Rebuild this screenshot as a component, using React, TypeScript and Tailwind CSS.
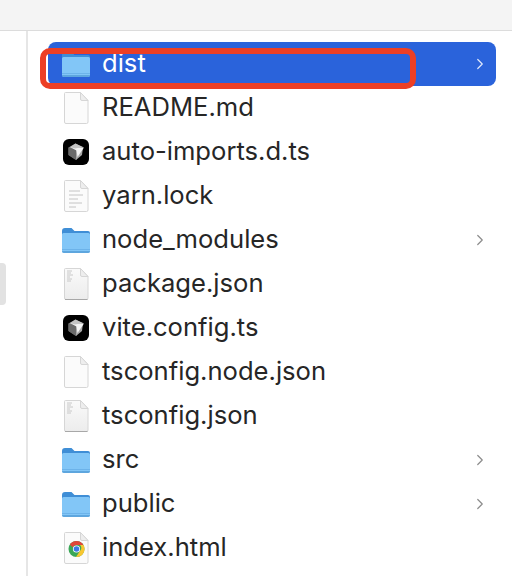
import { ChevronRight } from 'lucide-react';

type Kind = 'folder' | 'doc' | 'lines' | 'json' | 'vite' | 'chrome';

const files: { name: string; kind: Kind; chevron?: boolean }[] = [
    { name: 'dist', kind: 'folder', chevron: true },
    { name: 'README.md', kind: 'doc' },
    { name: 'auto-imports.d.ts', kind: 'vite' },
    { name: 'yarn.lock', kind: 'lines' },
    { name: 'node_modules', kind: 'folder', chevron: true },
    { name: 'package.json', kind: 'json' },
    { name: 'vite.config.ts', kind: 'vite' },
    { name: 'tsconfig.node.json', kind: 'doc' },
    { name: 'tsconfig.json', kind: 'json' },
    { name: 'src', kind: 'folder', chevron: true },
    { name: 'public', kind: 'folder', chevron: true },
    { name: 'index.html', kind: 'chrome' },
];

function PageShape({ children, shaded }: { children?: React.ReactNode; shaded?: boolean }) {
    return (
        <svg width="30" height="34" viewBox="0 0 30 34">
            <defs>
                <linearGradient id="pageShade" x1="0" y1="0" x2="0" y2="1">
                    <stop offset="0" stopColor="#fafafa" />
                    <stop offset="1" stopColor="#ececec" />
                </linearGradient>
            </defs>
            <path
                d="M4.5 1.5H19.5L27 9.5V31a1.500 1.500 0 0 1-1.500 1.500H5A1.500 1.500 0 0 1 3.500 31V2.500a1 1 0 0 1 1-1Z"
                fill={shaded ? 'url(#pageShade)' : '#fbfbfb'}
                stroke="#d6d6d6"
            />
            {shaded && <path d="M4 32.500H26.500" stroke="#a8a8a8" strokeWidth="1" />}
            <path d="M19.500 1.500V8a1.500 1.500 0 0 0 1.500 1.500H27Z" fill="#eeeeee" stroke="#d6d6d6" />
            {children}
        </svg>
    );
}

function FileIcon({ kind }: { kind: Kind }) {
    if (kind === 'folder') {
        return (
            <svg width="30" height="28" viewBox="0 0 30 28">
                <path d="M1 5a3 3 0 0 1 3-3h6.500l3 3H27a2 2 0 0 1 2 2v4H1Z" fill="#3f8ed6" />
                <path d="M1 8.500A1.500 1.500 0 0 1 2.500 7H27.500A1.500 1.500 0 0 1 29 8.500V25a2 2 0 0 1-2 2H3a2 2 0 0 1-2-2Z" fill="#82c6f7" />
                <rect x="1" y="23" width="28" height="1" fill="#6cb3ea" />
                <path d="M1 25h28a2 2 0 0 1-2 2H3a2 2 0 0 1-2-2Z" fill="#5ea6de" />
            </svg>
        );
    }
    if (kind === 'vite') {
        return (
            <svg width="26" height="26" viewBox="0 0 26 26">
                <rect width="26" height="26" rx="6" fill="#000" />
                <path d="M12.500 4.500 20 8.500 13 21 5.500 16V8.500Z" fill="#7c7c7c" />
                <path d="M5.500 8.500 13 11V21L5.500 16Z" fill="#6a6a6a" />
                <path d="M20 8.500 13 11V21L19 16Z" fill="#a8a8a8" />
                <path d="M7 8 21 8.500 14.500 18 13.500 11.500Z" fill="#f4f4f4" />
                <path d="M12.500 4.500 20 8 12 9.500 7 8Z" fill="#c4c4c4" />
            </svg>
        );
    }
    if (kind === 'lines') {
        return (
            <PageShape>
                <path d="M8 12H19M8 16H22M8 20H17M8 24H21M8 28H15" stroke="#c4c4c4" strokeWidth="1" />
            </PageShape>
        );
    }
    if (kind === 'json') {
        return (
            <PageShape shaded>
                <path d="M6 4H11M6 6H10M6 8H12M6 10H9M6 12H11M6 14H10" stroke="#c8c8c8" strokeWidth="1" />
            </PageShape>
        );
    }
    if (kind === 'chrome') {
        return (
            <PageShape>
                <circle cx="15.500" cy="18" r="8" fill="#3aa757" />
                <path d="M15.500 10a8 8 0 0 1 6.930 4H15.500a4 4 0 0 0-3.600 2.300L8.800 13.700A8 8 0 0 1 15.500 10Z" fill="#e0463a" />
                <path d="M22.430 14a8 8 0 0 1-7.400 12l3.900-6a4 4 0 0 0 .1-6Z" fill="#f8c630" />
                <circle cx="15.500" cy="18" r="3.600" fill="#fff" />
                <circle cx="15.500" cy="18" r="2.800" fill="#3b78e7" />
            </PageShape>
        );
    }
    return <PageShape />;
}

export default function App() {
    return (
        <div className="relative flex h-[576px] w-[512px] flex-col overflow-hidden bg-white font-['Inter',sans-serif]">
            <div className="h-[31px] shrink-0 border-b border-[#dcdcdc] bg-[#f4f4f4]" />
            <div className="flex min-h-0 flex-1">
                <div className="flex w-[28px] shrink-0 items-start border-r-2 border-[#e6e6e6] pt-[232px]">
                    <div className="h-[42px] w-[6px] rounded-r-[4px] bg-[#e2e2e2]" />
                </div>
                <div className="flex flex-1 flex-col pl-[20px] pr-[16px] pt-[11px]">
                    {files.map((f, i) => (
                        <div
                            key={f.name}
                            className={
                                'flex h-[44px] shrink-0 items-center rounded-[8px] ' +
                                (i === 0 ? 'bg-[#2a63db] text-white' : 'text-[#262626]')
                            }
                        >
                            <div className="flex w-[54px] shrink-0 justify-center pl-[2px]">
                                <FileIcon kind={f.kind} />
                            </div>
                            <span className="flex-1 pb-[2px] text-[25.6px] leading-none">{f.name}</span>
                            {f.chevron && (
                                <ChevronRight
                                    size={18}
                                    strokeWidth={1.6}
                                    className={'mr-[7px] ' + (i === 0 ? 'text-[#dfe8fb]' : 'text-[#8c8c8c]')}
                                />
                            )}
                        </div>
                    ))}
                </div>
            </div>
            {/* red annotation drawn over the selected row */}
            <div className="absolute left-[40px] top-[48px] h-[41px] w-[376px] rounded-[10px] border-[6px] border-[#ec3f25]" />
        </div>
    );
}
